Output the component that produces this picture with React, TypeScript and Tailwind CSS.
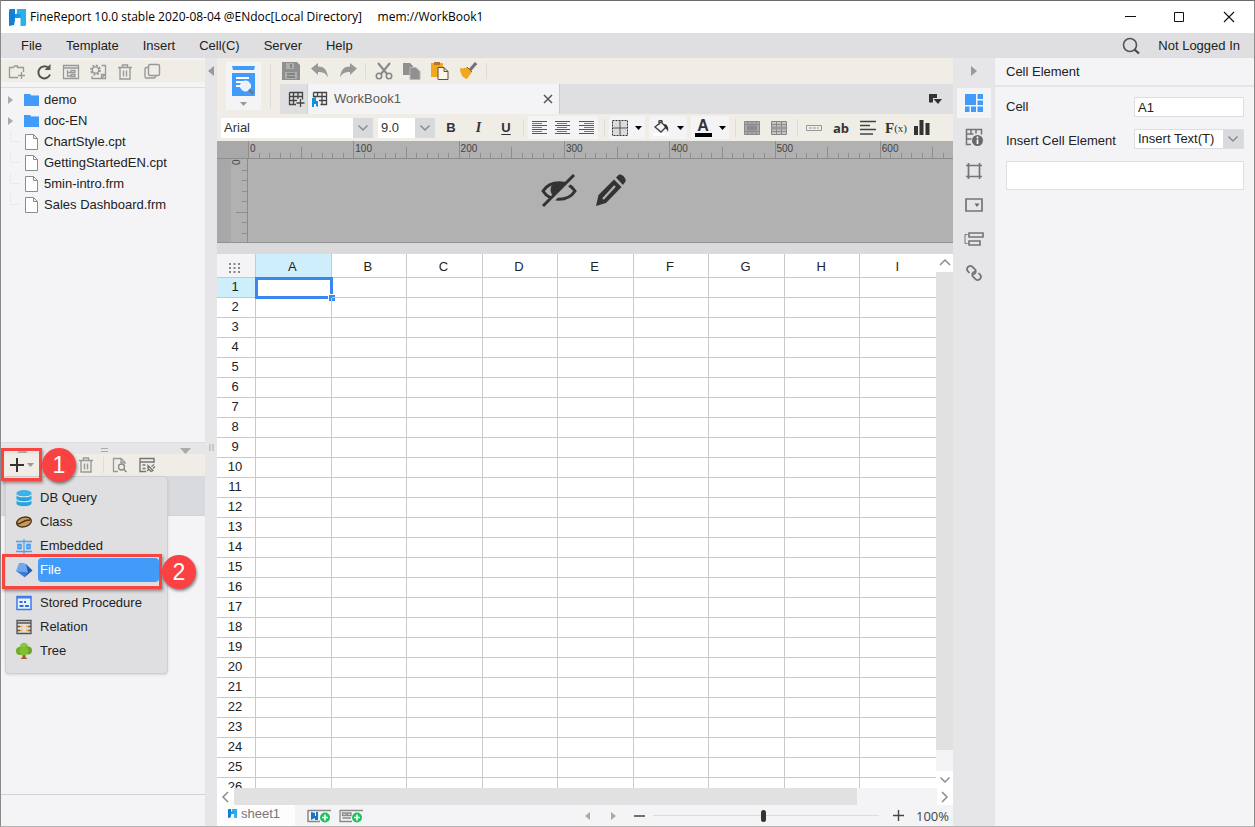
import { useState, type ReactNode } from "react";
import { clsx } from "clsx";

const columns = ["A", "B", "C", "D", "E", "F", "G", "H", "I"];
const rows = Array.from({ length: 26 }, (_, i) => i + 1);
const menus = ["File", "Template", "Insert", "Cell(C)", "Server", "Help"];

const tree = [
  { name: "demo", folder: true },
  { name: "doc-EN", folder: true },
  { name: "ChartStyle.cpt", folder: false },
  { name: "GettingStartedEN.cpt", folder: false },
  { name: "5min-intro.frm", folder: false },
  { name: "Sales Dashboard.frm", folder: false },
];

type SvgProps = { w?: number; h?: number; children: ReactNode; className?: string };

function Svg({ w = 18, h = 18, children, className }: SvgProps) {
  return (
    <svg width={w} height={h} viewBox={`0 0 ${w} ${h}`} fill="none" className={clsx("shrink-0", className)} aria-hidden="true">
      {children}
    </svg>
  );
}

function Logo({ size = 17 }: { size?: number }) {
  return (
    <svg width={size} height={size} viewBox="0 0 17 17" className="shrink-0" aria-hidden="true">
      <path d="M0 1.500Q0 0 1.500 0H6v11l-1 5-5 1z" fill="#0f7fd8" />
      <path d="M7.500 0H17v15.500Q17 17 15.500 17H11.500V9H6V5h1.500z" fill="#2bb0ea" />
      <path d="M6 5h5.500v4H6z" fill="#1b97e0" />
      <path d="M7 0v4.500" fill="none" stroke="#fff" strokeWidth="1.400" />
    </svg>
  );
}

function Chevron({ dir = "down" }: { dir?: "down" | "up" | "left" | "right" }) {
  const d = { down: "M2.500 4.500L7 9l4.500-4.500", up: "M2 9l5-5 5 5", left: "M9 2L4 7l5 5", right: "M4 2l5 5-5 5" }[dir];
  return (
    <Svg w={14} h={14}>
      <path d={d} stroke="#8c8c90" strokeWidth="1.500" />
    </Svg>
  );
}

function Caret({ className = "text-[#999]" }: { className?: string }) {
  return (
    <Svg w={7} h={4} className={className}>
      <path d="M0 0h7L3.500 4z" fill="currentColor" />
    </Svg>
  );
}

function Trash() {
  return (
    <Svg>
      <path d="M2 4.500h14M6.500 4V2h5v2M4 5v11h10V5M7.500 7.500v6M10.500 7.500v6" stroke="#999" strokeWidth="1.4" />
    </Svg>
  );
}

function Divider({ className }: { className?: string }) {
  return <span className={clsx("w-px shrink-0 bg-[#dddcd8]", className)} />;
}

function IconButton({ label, className, children }: { label: string; className?: string; children: ReactNode }) {
  return (
    <button type="button" aria-label={label} className={clsx("flex shrink-0 items-center justify-center", className)}>
      {children}
    </button>
  );
}

function Combo({ label, options, className }: { label: string; options: string[]; className?: string }) {
  return (
    <div className={clsx("relative h-5 shrink-0 bg-white", className)}>
      <select aria-label={label} className="h-full w-full appearance-none pr-5 pl-[3px] text-[13px] leading-5 outline-none">
        {options.map((option) => (
          <option key={option}>{option}</option>
        ))}
      </select>
      <span className="pointer-events-none absolute inset-y-0 right-0 flex w-5 items-center justify-center bg-[#d8dade]">
        <Chevron />
      </span>
    </div>
  );
}

function TitleBar() {
  return (
    <header className="flex h-8 shrink-0 items-center bg-white pl-2">
      <Logo />
      <h1 className="ml-1 font-['Open_Sans',sans-serif] text-[12px] whitespace-pre text-black">
        FineReport 10.0 stable 2020-08-04 @ENdoc[Local Directory]     mem://WorkBook1
      </h1>
      <div className="ml-auto flex">
        <IconButton label="Minimize" className="h-8 w-[49px]">
          <Svg w={12} h={12}><path d="M1 5.500h11" stroke="#111" /></Svg>
        </IconButton>
        <IconButton label="Maximize" className="h-8 w-[49px]">
          <Svg w={12} h={12}><path d="M1.500 1.500h9v9h-9z" stroke="#111" /></Svg>
        </IconButton>
        <IconButton label="Close" className="h-8 w-[51px]">
          <Svg w={12} h={12}><path d="M1 1l10 10M11 1L1 11" stroke="#111" strokeWidth="1.1" /></Svg>
        </IconButton>
      </div>
    </header>
  );
}

function MenuBar() {
  return (
    <nav className="flex h-[25px] shrink-0 items-center bg-[#dfdfe1] pr-3.5 pl-5">
      <div className="flex gap-6">
        {menus.map((menu) => (
          <button key={menu} type="button">{menu}</button>
        ))}
      </div>
      <IconButton label="Search" className="ml-auto">
        <Svg>
          <circle cx="8" cy="8" r="6.5" stroke="#555" strokeWidth="1.6" />
          <path d="M12.500 12.500l4.500 4" stroke="#444" strokeWidth="2.200" />
        </Svg>
      </IconButton>
      <button type="button" className="ml-[18px]">Not Logged In</button>
    </nav>
  );
}

function FileToolbar() {
  return (
    <div className="mt-0.5 flex h-[22px] shrink-0 items-center bg-[#efede5] pt-0.5 pl-[2px]">
      <IconButton label="New folder" className="w-[27px]">
        <Svg>
          <path d="M10 14.500H1.500v-10h4l1-1.500h3v1.500h6V9M10 12.500h7M13.500 9v7" stroke="#999" strokeWidth="1.3" />
        </Svg>
      </IconButton>
      <IconButton label="Refresh" className="w-[27px]">
        <Svg>
          <path d="M15 11.500A6 6 0 1 1 13.500 5" stroke="#555" strokeWidth="2" />
          <path d="M15.500 1v6H9.500z" fill="#555" />
        </Svg>
      </IconButton>
      <IconButton label="Explore" className="w-[27px]">
        <Svg>
          <path d="M1.500 2.500h15v13h-15zM1 5h16M5.500 7v6.500M5.500 9.500h3M5.500 13h3M9 7.500h4v2H9zM9 11.500h4v2H9z" stroke="#999" strokeWidth="1.3" />
        </Svg>
      </IconButton>
      <IconButton label="Settings" className="w-[27px]">
        <Svg>
          <circle cx="6.500" cy="7" r="4.500" stroke="#999" strokeWidth="2" strokeDasharray="2 1.5" />
          <circle cx="6.500" cy="7" r="3.200" stroke="#999" strokeWidth="1.300" />
          <path d="M12.500 2.500h4v13H3V13M12.500 15v-3.500h3.500M12.500 15l4-4" stroke="#999" strokeWidth="1.300" />
        </Svg>
      </IconButton>
      <IconButton label="Delete" className="w-[27px]"><Trash /></IconButton>
      <IconButton label="Duplicate" className="w-[27px]">
        <Svg>
          <rect x="5.500" y="1.500" width="11" height="11" rx="1.5" stroke="#999" strokeWidth="1.4" />
          <path d="M5 4.500H3.500Q2 4.500 2 6v7.500q0 1.500 1.500 1.500H11q1.500 0 1.500-1.500V13" stroke="#999" strokeWidth="1.4" />
        </Svg>
      </IconButton>
    </div>
  );
}

function FileTree() {
  return (
    <ul className="mt-[5px] h-[356px] shrink-0 border-t border-b border-[#dcdce0] pt-px">
      {tree.map((item) => (
        <li key={item.name} className="flex h-[21px] items-center pl-[7px]">
          <span className="w-4">
            {item.folder ? (
              <Svg w={5} h={8}><path d="M0 0l5 4-5 4z" fill="#aaa" /></Svg>
            ) : (
              <Svg w={12} h={21}><path d="M2.500 0v10.500H12" stroke="#eaeaed" /></Svg>
            )}
          </span>
          {item.folder ? (
            <Svg w={16} h={14}><path d="M0 1h6l1 1h8v11H0z" fill="#419bf9" /><path d="M7 2.500h8" stroke="#8fc4fb" /></Svg>
          ) : (
            <Svg w={16} h={18}><path d="M1.500 1.500h8l4 4v11h-12zM9.500 1.500v4h4" fill="#fff" stroke="#8c8c8c" /></Svg>
          )}
          <span className="ml-1">{item.name}</span>
        </li>
      ))}
    </ul>
  );
}

const datasets = [
  {
    name: "DB Query",
    icon: (
      <Svg>
        <path d="M1.500 4v10.500c0 3.500 15 3.500 15 0V4" fill="#27a3df" />
        <ellipse cx="9" cy="4" rx="7.500" ry="3" fill="#3fb0e8" />
        <path d="M1.500 5.500c1 3 14 3 15 0M1.500 10.500c1 3 14 3 15 0" stroke="#d5e6ee" strokeWidth="1.200" />
      </Svg>
    ),
  },
  {
    name: "Class",
    icon: (
      <Svg>
        <ellipse cx="9" cy="9" rx="7.5" ry="4.800" transform="rotate(-14 9 9)" fill="#c49a58" stroke="#4b3419" strokeWidth="1.300" />
        <path d="M2 11C7 11 7 7 15 7" stroke="#4b3419" strokeWidth="1.500" />
      </Svg>
    ),
  },
  {
    name: "Embedded",
    icon: (
      <Svg>
        <path d="M1 4.500h16M1 14.500h16M9 2v15" stroke="#52a1ef" strokeWidth="1.300" />
        <path d="M2 6.500h5v6H2zM11 6.500h5v6h-5z" fill="#7db8f3" />
        <path d="M3 7.500h3v4H3zM12 7.500h3v4h-3z" stroke="#3f92ea" />
      </Svg>
    ),
  },
  {
    name: "File",
    icon: (
      <Svg>
        <path d="M4 2l7 1 6.500 6.500-7 6z" fill="#2459b0" />
        <path d="M4 2l7 1 2 9-12-2z" fill="#6fa8ee" />
        <path d="M1 10l11.500 1.500-2.500 5z" fill="#3b7ad6" />
      </Svg>
    ),
  },
  {
    name: "Stored Procedure",
    icon: (
      <Svg>
        <path d="M2 2.500h14v13H2z" fill="#eaf1fc" stroke="#3f7bea" strokeWidth="1.5" />
        <path d="M2 3.500h14" stroke="#3f7bea" strokeWidth="2" />
        <path d="M4.500 8h3M9 8h2M4.500 12h4M10 12h4" stroke="#2f6fe4" strokeWidth="2" />
      </Svg>
    ),
  },
  {
    name: "Relation",
    icon: (
      <Svg>
        <path d="M2 2.500h14v13H2zM2 5h14" stroke="#555" strokeWidth="1.300" />
        <path d="M2 8.500h3M2 12.500h3M13 8.500h3M13 12.500h3" stroke="#555" strokeWidth="1.300" />
        <path d="M5 8.500h2.500M5 12.500h2.500M11 8.500h2.500M11 12.500h2.500" stroke="#f2a43a" strokeWidth="1.500" />
      </Svg>
    ),
  },
  {
    name: "Tree",
    icon: (
      <Svg>
        <path d="M7.500 11h3v4l2 2h-7l2-2z" fill="#a3622a" />
        <circle cx="9" cy="5" r="4.300" fill="#8cc63a" />
        <circle cx="5" cy="9" r="4" fill="#6fae28" />
        <circle cx="13" cy="8.500" r="4" fill="#6aa823" />
        <circle cx="9" cy="9" r="4.300" fill="#83bf31" />
      </Svg>
    ),
  },
];

function DatasetMenu() {
  return (
    <div role="menu" className="absolute top-[33px] left-1 z-10 w-[163px] rounded border border-[#cfcfd2] bg-[#dfdfe1] pt-[9px] pb-2.5 shadow-sm">
      {datasets.map(({ name, icon }) => (
        <button
          key={name}
          type="button"
          role="menuitem"
          className={clsx("flex h-6 w-full items-center pr-2 pl-[9px] text-left", name === "File" && "mb-[9px]")}
        >
          {icon}
          <span className={clsx("ml-[5px] h-6 flex-1 rounded pl-0.5 leading-6", name === "File" && "bg-[#419bf9] text-white")}>
            {name}
          </span>
        </button>
      ))}
    </div>
  );
}

function Badge({ n, className }: { n: number; className: string }) {
  return (
    <span
      className={clsx(
        "absolute z-20 flex size-[34px] items-center justify-center rounded-full bg-[#fb4243] text-[23px] text-white shadow-[1px_2px_3px_rgba(0,0,0,0.45)]",
        className,
      )}
    >
      {n}
    </span>
  );
}

function DatasetPanel() {
  return (
    <section className="relative flex min-h-0 flex-1 flex-col">
      <div className="relative flex h-[11px] shrink-0 items-center justify-between bg-[#e6e6e8] pt-1 pr-3.5 pl-4">
        <Svg w={11} h={5}><path d="M0 5l5.500-5L11 5z" fill="#aaa" /></Svg>
        <Svg w={7} h={5}><path d="M0 .5h7M0 3.500h7" stroke="#aaa" /></Svg>
        <Svg w={11} h={6}><path d="M0 0h11L5.500 6z" fill="#aaa" /></Svg>
      </div>
      <div className="flex h-[22px] shrink-0 items-center bg-[#efede5] pl-[7px]">
        <IconButton label="Add dataset" className="w-[26px] gap-0.5">
          <Svg w={16} h={16}><path d="M8 1v14M1 8h14" stroke="#333" strokeWidth="2" /></Svg>
          <Caret />
        </IconButton>
        <IconButton label="Delete dataset" className="ml-[43px] w-[18px]"><Trash /></IconButton>
        <Divider className="ml-2 h-4" />
        <IconButton label="Preview dataset" className="ml-[7px]">
          <Svg>
            <path d="M7 15.500H2.500v-13H10l4 4V8M10 2.500v4h4" stroke="#999" strokeWidth="1.3" />
            <circle cx="10.500" cy="11" r="3" stroke="#888" strokeWidth="1.300" />
            <path d="M12.500 13l3 3" stroke="#888" strokeWidth="1.500" />
          </Svg>
        </IconButton>
        <IconButton label="Connection" className="ml-[9px]">
          <Svg>
            <path d="M8 15.500H2v-13h14V7M2 6h14M4.500 9h3M4.500 12.500h3" stroke="#777" strokeWidth="1.4" />
            <path d="M9 15l2-2M10 9.500l5 5-2 1-3-3zM13.500 10.500l2.500-2M15 12.500l2-2" stroke="#777" strokeWidth="1.300" />
          </Svg>
        </IconButton>
      </div>
      <div className="h-10 shrink-0 border-b border-[#d2d3d6] bg-[#d9dadd]" />
      <div className="flex-1" />
      <div className="h-8 shrink-0 border-t border-[#d2d3d6]" />
      <DatasetMenu />
      <span className="pointer-events-none absolute top-[5px] left-0 z-20 h-[33px] w-[41px] border-[3px] border-[#f8453f] shadow-[1px_2px_3px_rgba(0,0,0,0.4)]" />
      <span className="pointer-events-none absolute top-[111px] left-px z-20 h-[35px] w-40 border-[3px] border-[#f8453f] shadow-[1px_2px_3px_rgba(0,0,0,0.4)]" />
      <Badge n={1} className="top-[5px] left-[41px]" />
      <Badge n={2} className="top-[112px] left-[161px]" />
    </section>
  );
}

function MainToolbar() {
  return (
    <div className="flex h-[26px] items-center pl-0.5">
      <IconButton label="Save">
        <Svg>
          <path d="M0 0h15l3 3v15H0z" fill="#8f8f8f" />
          <path d="M4 1h8v6H4zM3 10h12v7H3z" fill="#aeaeae" />
          <path d="M9 2v4M5 12h8M5 15h8" stroke="#777" strokeWidth="1.500" />
        </Svg>
      </IconButton>
      <IconButton label="Undo" className="ml-[11px]">
        <Svg><path d="M0 6.500L7 1v3.500c6 0 9 3 10 11-3-5-5-5.500-10-5.500v3z" fill="#999" /></Svg>
      </IconButton>
      <IconButton label="Redo" className="ml-2.5">
        <Svg><path d="M18 6.500L11 1v3.500C5 4.500 2 7.500 1 15.500c3-5 5-5.500 10-5.500v3z" fill="#999" /></Svg>
      </IconButton>
      <Divider className="ml-2 h-4" />
      <IconButton label="Cut" className="ml-[9px]">
        <Svg>
          <path d="M3 1l9.500 11.500M15 1L5.500 12.500" stroke="#888" strokeWidth="2" />
          <circle cx="4" cy="14" r="2.700" stroke="#888" strokeWidth="1.600" />
          <circle cx="14" cy="14" r="2.700" stroke="#888" strokeWidth="1.600" />
        </Svg>
      </IconButton>
      <IconButton label="Copy" className="ml-2.5">
        <Svg><path d="M0 1h7l3 3v9H0z" fill="#909090" /><path d="M7 5.500h6l4 4v8H7z" fill="#909090" stroke="#b8b8b8" /></Svg>
      </IconButton>
      <IconButton label="Paste" className="ml-2.5">
        <Svg><path d="M0 1h12v14H0z" fill="#f1a81e" /><path d="M3 0h6v3H3z" fill="#b9752d" /><path d="M7 5.500h6l4 4v8H7zM13 5.500v4h4" fill="#fdf8e6" stroke="#59543e" /></Svg>
      </IconButton>
      <IconButton label="Format painter" className="ml-2.5">
        <Svg><path d="M17 1l-6 7" stroke="#70737e" strokeWidth="3" /><path d="M1 6c3 1 5 0 7-1l5 5-5 7C4 16 1 12 1 6z" fill="#f1a81e" /><path d="M8 5l5 5" stroke="#8a681f" /></Svg>
      </IconButton>
      <Divider className="ml-[9px] h-4" />
    </div>
  );
}

function TabStrip() {
  return (
    <div className="flex h-[30px] items-stretch bg-[#dfdfe1]">
      <IconButton label="New template" className="w-7 border-r border-[#d0d1d4] pl-1">
        <Svg><path d="M2.500 2.500h13v7M2.500 2.500v12H9M2.500 6.500h13M2.500 10.500H10M6.500 2.500v12M11 2.500V9M9.500 13h8M13.500 9v8" stroke="#444" strokeWidth="1.300" /></Svg>
      </IconButton>
      <div className="flex w-[252px] items-center border-r border-[#c9cacd] bg-[#f4f4f7] pr-[5px] pl-[3px] text-[#5a5a5a]">
        <Svg>
          <path d="M2.500 2.500h13v12h-6M2.500 2.500V7M2.500 6.500h13M8 10.500h7.500M6.500 2.500v4M11 2.500v12" stroke="#444" strokeWidth="1.300" />
          <path d="M1 8l4-1v4h2v6l-2-1v-2H3v3H1z" fill="#148fe0" />
        </Svg>
        <span className="ml-[5px]">WorkBook1</span>
        <IconButton label="Close tab" className="ml-auto">
          <Svg w={12} h={12}><path d="M2 2l8 8M10 2l-8 8" stroke="#555" strokeWidth="1.5" /></Svg>
        </IconButton>
      </div>
      <IconButton label="All templates" className="ml-auto w-9">
        <Svg w={14} h={12}><path d="M1 9.500V1h8v4H5v4.500z" fill="#333" /><path d="M5.500 6H14l-4 5z" fill="#333" /></Svg>
      </IconButton>
    </div>
  );
}

function AlignIcon({ x }: { x: number }) {
  return (
    <Svg w={15} h={13}>
      <path d="M0 .5h15M0 4.500h15M0 8.500h15M0 12.500h15" stroke="#555" />
      <path d={`M${x} 2.500h10M${x} 6.500h10M${x} 10.500h10`} stroke="#777" />
    </Svg>
  );
}

function FormatBar() {
  return (
    <div className="flex h-[27px] shrink-0 items-center overflow-hidden bg-[#efede5] pl-1 text-[#333]">
      <Combo label="Font" options={["Arial"]} className="w-[152px]" />
      <Combo label="Font size" options={["9.0"]} className="ml-[5px] w-[57px]" />
      <IconButton label="Bold" className="ml-0.5 w-7 font-black">B</IconButton>
      <IconButton label="Italic" className="w-[27px] font-['Liberation_Serif',serif] text-[14px] font-bold italic">I</IconButton>
      <IconButton label="Underline" className="w-7 font-bold underline underline-offset-2">U</IconButton>
      <Divider className="ml-[3px] h-[18px]" />
      <div className="ml-1 flex h-[23px] w-[70px] shrink-0 items-center justify-around bg-[#f4f4f7]">
        <IconButton label="Align left"><AlignIcon x={0} /></IconButton>
        <IconButton label="Align center"><AlignIcon x={2} /></IconButton>
        <IconButton label="Align right"><AlignIcon x={5} /></IconButton>
      </div>
      <Divider className="ml-1.5 h-[18px]" />
      <IconButton label="Borders" className="ml-1 h-[23px] w-9 gap-[7px] bg-[#f4f4f7]">
        <Svg w={16} h={16}>
          <path d="M.5.5h15v15H.5z" fill="#dcdcdf" stroke="#333" strokeDasharray="2 1" />
          <path d="M8 1v14M1 8h14" stroke="#555" />
        </Svg>
        <Caret className="text-black" />
      </IconButton>
      <IconButton label="Fill colour" className="ml-1 h-[23px] w-[38px] gap-2 bg-[#f4f4f7]">
        <Svg w={16} h={16}>
          <path d="M0 13h16v3H0z" fill="#fff" />
          <path d="M2 7l6-5 5 5-5 5zM6 5V1q1.500-1.500 3 0v3" stroke="#444" strokeWidth="1.400" />
          <path d="M11 4c3 0 5 3 4 8-1-3-2-3-3-4z" fill="#333" />
        </Svg>
        <Caret className="text-black" />
      </IconButton>
      <IconButton label="Text colour" className="ml-1 h-[23px] w-[38px] gap-[7px] bg-[#f4f4f7]">
        <span className="w-[17px] border-b-4 border-black text-[16px] leading-[14px] font-bold">A</span>
        <Caret className="text-black" />
      </IconButton>
      <Divider className="ml-1.5 h-[18px]" />
      <IconButton label="Merge cells" className="ml-2 w-4">
        <Svg w={16} h={14}><path d="M.5.5h15v13H.5zM.5 3.500h15M.5 10.500h15M4 0v3M8 0v3M12 0v3M4 11v3M8 11v3M12 11v3" fill="#aaa" stroke="#888" /><path d="M3 4.500h10v5H3z" fill="#8c8c8c" /></Svg>
      </IconButton>
      <IconButton label="Unmerge cells" className="ml-[11px] w-4">
        <Svg w={16} h={14}><path d="M.5.5h15v13H.5zM.5 3.500h15M.5 7h15M.5 10.500h15M5.500 0v14M10.500 0v14" fill="#c4c4c4" stroke="#888" /><path d="M1 5h14v4H1z" fill="#999" opacity=".6" /></Svg>
      </IconButton>
      <Divider className="ml-2.5 h-[18px]" />
      <IconButton label="Text field" className="ml-2 w-4">
        <Svg w={16} h={6}><path d="M.5.5h15v5H.5zM3 3h3M7 3h3M11 3h2" stroke="#999" /></Svg>
      </IconButton>
      <IconButton label="Text" className="ml-2 w-[22px] font-['Open_Sans',sans-serif] font-bold">ab</IconButton>
      <IconButton label="Rich text" className="ml-[7px] w-[18px]">
        <Svg w={18} h={16}><path d="M1 1.500h16M1 5.500h10M1 9.500h16M1 14h13" stroke="#444" strokeWidth="1.500" /></Svg>
      </IconButton>
      <IconButton label="Formula" className="ml-2 w-[22px] font-['Liberation_Serif',serif] text-[15px] font-bold">
        F<span className="text-[11px] font-normal">(x)</span>
      </IconButton>
      <IconButton label="Chart" className="ml-1.5 w-[18px]">
        <Svg w={16} h={15}><path d="M0 6h4v9H0zM5.500 0h4v15h-4zM11.500 3h4v12h-4z" fill="#333" /></Svg>
      </IconButton>
    </div>
  );
}

// Unit ruler: a short tick every 10 units, a longer one every 50 and a label every 100.
const UNIT = 1.053;

function Ruler() {
  return (
    <svg width="100%" height="17" className="block flex-1 overflow-hidden" aria-hidden="true">
      {Array.from({ length: 120 }, (_, i) => (
        <path
          key={i}
          d={`M${Math.round(i * 10 * UNIT) + 0.5} ${i % 10 === 0 ? 0 : i % 5 === 0 ? 6 : 12}V18`}
          stroke="#8d8d8d"
        />
      ))}
      {[0, 100, 200, 300, 400, 500, 600].map((v) => (
        <text key={v} x={v * UNIT + 2} y="11" fontSize="10" fill="#444">{v}</text>
      ))}
    </svg>
  );
}

function ReportCanvas() {
  return (
    <div className="shrink-0 bg-[#b1b1b1]">
      <div className="flex h-[18px] border-b border-[#8c8c8c]">
        <span className="w-[31px] shrink-0 bg-[#a8a8a8]" />
        <Ruler />
      </div>
      <div className="flex h-[84px] border-b border-[#909090]">
        <span className="w-3.5 bg-[#a8a8a8]" />
        <svg width="17" height="84" className="border-r border-[#8c8c8c]" aria-hidden="true">
          {[1, 2, 3, 4, 5, 6, 7].map((i) => (
            <path key={i} d={`M${i === 5 ? 5 : 11} ${Math.round(i * 10 * UNIT) + 0.5}H17`} stroke="#8d8d8d" />
          ))}
          <text transform="translate(2 6) rotate(-90)" x="0" y="7" fontSize="10" fill="#444">0</text>
        </svg>
        <div className="flex flex-1 items-start justify-center gap-[17px] pt-[15px] pr-8">
          <IconButton label="Hide">
            <Svg w={36} h={34}>
              <path d="M2 17c7-11 25-11 32 0-7 11-25 11-32 0z" stroke="#333" strokeWidth="3" />
              <path d="M10 13c4-6 12-6 15-1l-11 11c-4-2-5-6-4-10z" fill="#333" />
              <path d="M5 33.500L34 2.500" stroke="#b1b1b1" strokeWidth="4" />
              <path d="M2 32L33 1" stroke="#333" strokeWidth="3" />
            </Svg>
          </IconButton>
          <IconButton label="Edit">
            <Svg w={34} h={34}>
              <path d="M2 32l2.500-11L20 5.500l7.500 7.500L12 29z" fill="#333" />
              <path d="M22 3.500L24.500 1c3-2 8 3 7 6.500L29 11z" fill="#333" />
              <path d="M9 25L21 12" stroke="#b1b1b1" strokeWidth="2.200" />
            </Svg>
          </IconButton>
        </div>
      </div>
    </div>
  );
}

function Sheet() {
  return (
    <div className="flex min-h-0 flex-1">
      <div className="min-w-0 flex-1 overflow-hidden bg-white">
        <table className="w-full table-fixed border-separate border-spacing-0">
          <thead>
            <tr className="h-6">
              <th className="w-[39px] border-r border-b border-[#c9c9c9] bg-[#f4f4f7] p-0 pt-1 pr-1" aria-label="Select all">
                <Svg w={12} h={10} className="mx-auto">
                  <path d="M1 1h11M1 5h11M1 9h11" stroke="#888" strokeWidth="2" strokeDasharray="2 2.500" />
                </Svg>
              </th>
              {columns.map((column) => (
                <th
                  key={column}
                  scope="col"
                  className={clsx("border-r border-b border-[#c9c9c9] p-0 pt-0.5 pr-0.5 font-normal last:border-r-0", column === "A" && "bg-[#ceeefb]")}
                >
                  {column}
                </th>
              ))}
            </tr>
          </thead>
          <tbody>
            {rows.map((row) => (
              <tr key={row} className="h-5">
                <th
                  scope="row"
                  className={clsx("border-r border-b border-[#c9c9c9] p-0 pr-0.5 pb-0.5 leading-4 font-normal", row === 1 && "bg-[#ceeefb]")}
                >
                  {row}
                </th>
                {columns.map((column) => (
                  <td key={column} className="relative border-r border-b border-[#c9c9c9] p-0 last:border-r-0">
                    {row === 1 && column === "A" && (
                      <span className="absolute -inset-px -right-0.5 -bottom-0.5 border-[3px] border-[#3a87f0]">
                        <span className="absolute -right-[5px] -bottom-[5px] size-[7px] border-t border-l border-white bg-[#3a87f0]" />
                      </span>
                    )}
                  </td>
                ))}
              </tr>
            ))}
          </tbody>
        </table>
      </div>
      <div className="flex w-[17px] shrink-0 flex-col bg-[#f4f4f7]">
        <IconButton label="Scroll up" className="h-[18px] bg-white"><Chevron dir="up" /></IconButton>
        <div className="flex-1 bg-[#e1e1e1]" />
        <div className="h-[21px]" />
        <IconButton label="Scroll down" className="h-[17px] bg-white"><Chevron /></IconButton>
      </div>
    </div>
  );
}

function SheetBar() {
  const [zoom, setZoom] = useState(49);

  return (
    <footer className="shrink-0 bg-[#f4f4f7]">
      <div className="flex h-[17px]">
        <IconButton label="Scroll left" className="w-[17px] bg-white"><Chevron dir="left" /></IconButton>
        <div className="flex-1 bg-[#e1e1e1]" />
        <div className="w-20" />
        <IconButton label="Scroll right" className="w-4 bg-white"><Chevron dir="right" /></IconButton>
      </div>
      <div className="flex h-[21px] items-center pr-1">
        <button type="button" className="flex h-full w-[78px] items-center bg-[#fdfdfd] pb-1 pl-[11px] text-[#777]">
          <Logo size={9} />
          <span className="ml-1">sheet1</span>
        </button>
        <IconButton label="Add report sheet" className="ml-3">
          <Svg w={24} h={16}>
            <path d="M1 2.500h23M1 2v11.500h12" stroke="#888" strokeWidth="1.500" />
            <path d="M4 4l4 1v3h1V4h2v8H8v-2l-4 2z" fill="#1275c8" />
            <circle cx="18" cy="9.500" r="5" fill="#1fc05c" />
            <path d="M18 6.500v6M15 9.500h6" stroke="#fff" strokeWidth="1.600" />
          </Svg>
        </IconButton>
        <IconButton label="Add form sheet" className="ml-2">
          <Svg w={24} h={16}>
            <path d="M1 2.500h23M1 2v11.500h12M3.500 5h3.500v2.500H3.500zM8.500 5H12v2.500H8.500zM3.500 10H12" stroke="#888" strokeWidth="1.300" />
            <circle cx="18" cy="9.500" r="5" fill="#1fc05c" />
            <path d="M18 6.500v6M15 9.500h6" stroke="#fff" strokeWidth="1.600" />
          </Svg>
        </IconButton>
        <IconButton label="Previous sheet" className="ml-auto">
          <Svg w={5} h={8}><path d="M5 0v8L0 4z" fill="#aaa" /></Svg>
        </IconButton>
        <IconButton label="Next sheet" className="ml-[21px]">
          <Svg w={5} h={8}><path d="M0 0v8l5-4z" fill="#aaa" /></Svg>
        </IconButton>
        <IconButton label="Zoom out" className="ml-[18px]">
          <Svg w={11} h={11}><path d="M0 6h11" stroke="#444" strokeWidth="1.500" /></Svg>
        </IconButton>
        <input
          type="range"
          aria-label="Zoom"
          value={zoom}
          onChange={(event) => setZoom(Number(event.target.value))}
          className="ml-2 h-3 w-[226px] appearance-none bg-transparent bg-[linear-gradient(#dcdcdf,#dcdcdf)] bg-[length:100%_1px] bg-center bg-no-repeat [&::-webkit-slider-thumb]:h-3 [&::-webkit-slider-thumb]:w-[5px] [&::-webkit-slider-thumb]:appearance-none [&::-webkit-slider-thumb]:rounded-sm [&::-webkit-slider-thumb]:bg-[#333]"
        />
        <IconButton label="Zoom in" className="ml-3.5">
          <Svg w={11} h={11}><path d="M0 5.500h11M5.500 0v11" stroke="#444" strokeWidth="1.400" /></Svg>
        </IconButton>
        <span className="ml-3 font-['Open_Sans',sans-serif] text-[13px] text-[#444]">100%</span>
      </div>
    </footer>
  );
}

const panels = [
  {
    name: "Cell element",
    icon: <Svg><path d="M0 0h11v11H0zM12.500 0H18v5h-5.500zM12.500 6.500H18V11h-5.500zM0 12.500h4.500V18H0zM6 12.500h5V18H6zM12.500 12.500H18V18h-5.500z" fill="#419bf9" /></Svg>,
  },
  {
    name: "Cell attributes",
    icon: (
      <Svg>
        <path d="M6 16.500H1.500v-15h15v5M1.500 6h7M1.500 11h5M6 1.500V6M11 1.500v4" stroke="#747476" strokeWidth="1.500" />
        <circle cx="12.500" cy="12.500" r="5.500" fill="#68686b" />
        <path d="M12.500 8.500v2M12.500 11.500v4.500" stroke="#fff" strokeWidth="1.700" />
      </Svg>
    ),
  },
  {
    name: "Floating element",
    icon: <Svg><path d="M3.500 1v16M14.500 1v16M1 3.500h16M1 14.500h16" stroke="#747476" strokeWidth="1.700" /></Svg>,
  },
  {
    name: "Widget settings",
    icon: <Svg><path d="M1 3h16v12H1z" stroke="#747476" strokeWidth="1.700" /><path d="M9.500 7.500h5l-2.500 3.500z" fill="#68686b" /></Svg>,
  },
  {
    name: "Condition attributes",
    icon: <Svg w={20} h={18}><path d="M3.500 4.500H1v9h2.500" stroke="#747476" /><path d="M5 3h14v4H5zM5 11h11v4H5z" stroke="#747476" strokeWidth="1.600" /></Svg>,
  },
  {
    name: "Hyperlink",
    icon: (
      <Svg>
        <path d="M8 10.500Q11.500 9.500 10.500 6L7.500 2.800Q5.500 1 3.300 2.700Q1 5 2.800 7.200L4.500 9" stroke="#747476" strokeWidth="1.800" />
        <path d="M10 7.500Q6.500 8.500 7.500 12L10.500 15.200Q12.500 17 14.700 15.300Q17 13 15.200 10.800L13.500 9" stroke="#747476" strokeWidth="1.800" />
      </Svg>
    ),
  },
];

function PropertyPanel() {
  return (
    <>
      <aside className="flex w-[42px] shrink-0 flex-col items-center gap-1 bg-[#e6e6e8]">
        <IconButton label="Collapse panel" className="h-[26px]">
          <Svg w={6} h={10}><path d="M0 0l6 5-6 5z" fill="#999" /></Svg>
        </IconButton>
        {panels.map(({ name, icon }, i) => (
          <IconButton key={name} label={name} className={clsx("h-[30px] w-[34px]", i === 0 && "bg-[#f4f4f7]")}>
            {icon}
          </IconButton>
        ))}
      </aside>
      <section className="w-[259px] shrink-0 bg-[#f4f4f7]">
        <h2 className="flex h-[29px] items-center border-b-2 border-[#e4e4e7] pl-[11px]">Cell Element</h2>
        <form className="grid grid-cols-[128px_1fr] items-center gap-y-3 py-2.5 pr-2.5 pl-[11px]">
          <label htmlFor="cell">Cell</label>
          <input id="cell" defaultValue="A1" className="h-5 w-full border border-[#dedee1] bg-white px-[3px]" />
          <label htmlFor="insert-kind" className="pt-1">Insert Cell Element</label>
          <div className="relative h-5 border border-[#dedee1] bg-white">
            <select id="insert-kind" className="block h-full w-full appearance-none pr-5 pl-[3px] leading-4">
              <option>Insert Text(T)</option>
            </select>
            <span className="pointer-events-none absolute inset-y-0 right-0 flex w-5 items-center justify-center bg-[#d8dade]">
              <Chevron />
            </span>
          </div>
          <input aria-label="Cell text" className="col-span-2 h-[29px] w-full border border-[#dedee1] bg-white px-1" />
        </form>
      </section>
    </>
  );
}

export default function App() {
  return (
    <div className="flex h-screen flex-col overflow-hidden border border-t-[#6b6b6b] border-r-[#8a8a8a] border-b-[#b5b5b5] border-l-[#8a8a8a] bg-[#f4f4f7] font-['Liberation_Sans',Arial,sans-serif] text-[13px] leading-4 text-[#222]">
      <TitleBar />
      <MenuBar />
      <main className="flex min-h-0 flex-1">
        <aside className="flex w-[204px] shrink-0 flex-col">
          <FileToolbar />
          <FileTree />
          <DatasetPanel />
        </aside>
        <div className="flex w-3 shrink-0 flex-col items-center bg-[#e6e6e8]">
          <Svg w={6} h={10} className="mt-2"><path d="M6 0L0 5l6 5z" fill="#999" /></Svg>
          <Svg w={5} h={7} className="mt-[368px]"><path d="M1 0v7M4 0v7" stroke="#aaa" /></Svg>
        </div>
        <section className="flex min-w-0 flex-1 flex-col">
          <div className="flex h-14 shrink-0 bg-[#efede5] pl-[9px]">
            <button type="button" aria-label="Preview" className="mt-1 flex h-[48px] w-[35px] flex-col items-center justify-between bg-[#f4f4f7] pt-1 pb-1">
              <Svg w={23} h={31}>
                <path d="M0 0h23l-1 4H1zM0 7h23v23H0z" fill="#419bf9" />
                <path d="M4 12h13M4 16h7M4 20h6" stroke="#fff" strokeWidth="1.800" />
                <circle cx="13.500" cy="20" r="5" fill="#e8f3fe" stroke="#fff" />
                <path d="M17 23.500l4 4" stroke="#777" strokeWidth="2.500" />
              </Svg>
              <Caret />
            </button>
            <Divider className="mt-1.5 ml-[9px] h-11" />
            <div className="ml-[9px] min-w-0 flex-1">
              <MainToolbar />
              <TabStrip />
            </div>
          </div>
          <FormatBar />
          <ReportCanvas />
          <div className="h-[11px] shrink-0 bg-[#dadadc]" />
          <Sheet />
          <SheetBar />
        </section>
        <PropertyPanel />
      </main>
    </div>
  );
}
